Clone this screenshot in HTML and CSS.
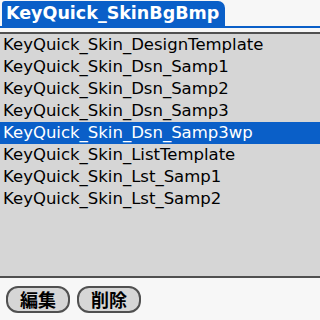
FILE: index.html
```html
<!DOCTYPE html>
<html lang="ja">

<head>
    <meta charset="UTF-8">
    <meta name="viewport" content="width=device-width, initial-scale=1.0">
    <title>KeyQuick_SkinBgBmp</title>
    <link rel="stylesheet" href="styles.css">
</head>

<body>
    <div class="title-bar">
        <div class="title-tab">KeyQuick_SkinBgBmp</div>
    </div>
    <div class="list">
        <div class="item">KeyQuick_Skin_DesignTemplate</div>
        <div class="item">KeyQuick_Skin_Dsn_Samp1</div>
        <div class="item">KeyQuick_Skin_Dsn_Samp2</div>
        <div class="item">KeyQuick_Skin_Dsn_Samp3</div>
        <div class="item selected">KeyQuick_Skin_Dsn_Samp3wp</div>
        <div class="item">KeyQuick_Skin_ListTemplate</div>
        <div class="item">KeyQuick_Skin_Lst_Samp1</div>
        <div class="item">KeyQuick_Skin_Lst_Samp2</div>
    </div>
    <div class="footer">
        <button class="btn">編集</button>
        <button class="btn">削除</button>
    </div>
</body>

</html>
```

FILE: styles.css
```css
body {
    margin: 0;
    width: 320px;
    height: 320px;
    display: flex;
    flex-direction: column;
    background-color: #f7f7f7;
    font-family: "DejaVu Sans", "Noto Sans CJK JP", sans-serif;
    overflow: hidden;
}

.title-bar {
    height: 25px;
    padding: 1px 0 0 2px;
    border-bottom: 2px solid #0a5fc8;
    display: flex;
}

.title-tab {
    width: 219px;
    padding-left: 4px;
    background-color: #0a5fc8;
    color: #ffffff;
    font-weight: bold;
    font-size: 17.5px;
    line-height: 25px;
    border-radius: 3px 7px 0 0;
    white-space: nowrap;
}

.list {
    margin-top: 4px;
    height: 242px;
    background-color: #d6d6d6;
    border-top: 2px solid #505050;
    border-bottom: 2px solid #505050;
}

.item {
    height: 22px;
    line-height: 22px;
    padding-left: 3px;
    font-size: 16.5px;
    color: #000000;
    white-space: nowrap;
}

.item.selected {
    background-color: #0a5fc8;
    color: #ffffff;
}

.footer {
    flex: 1;
    display: flex;
    align-items: center;
    gap: 7px;
    padding: 1px 0 0 6px;
}

.btn {
    height: 27px;
    width: 64px;
    padding: 0;
    border: 2px solid #505050;
    border-radius: 12px;
    background-color: #d6d6d6;
    font-family: "Noto Sans CJK JP", sans-serif;
    font-weight: bold;
    font-size: 18px;
    line-height: 23px;
    color: #000000;
}
```
